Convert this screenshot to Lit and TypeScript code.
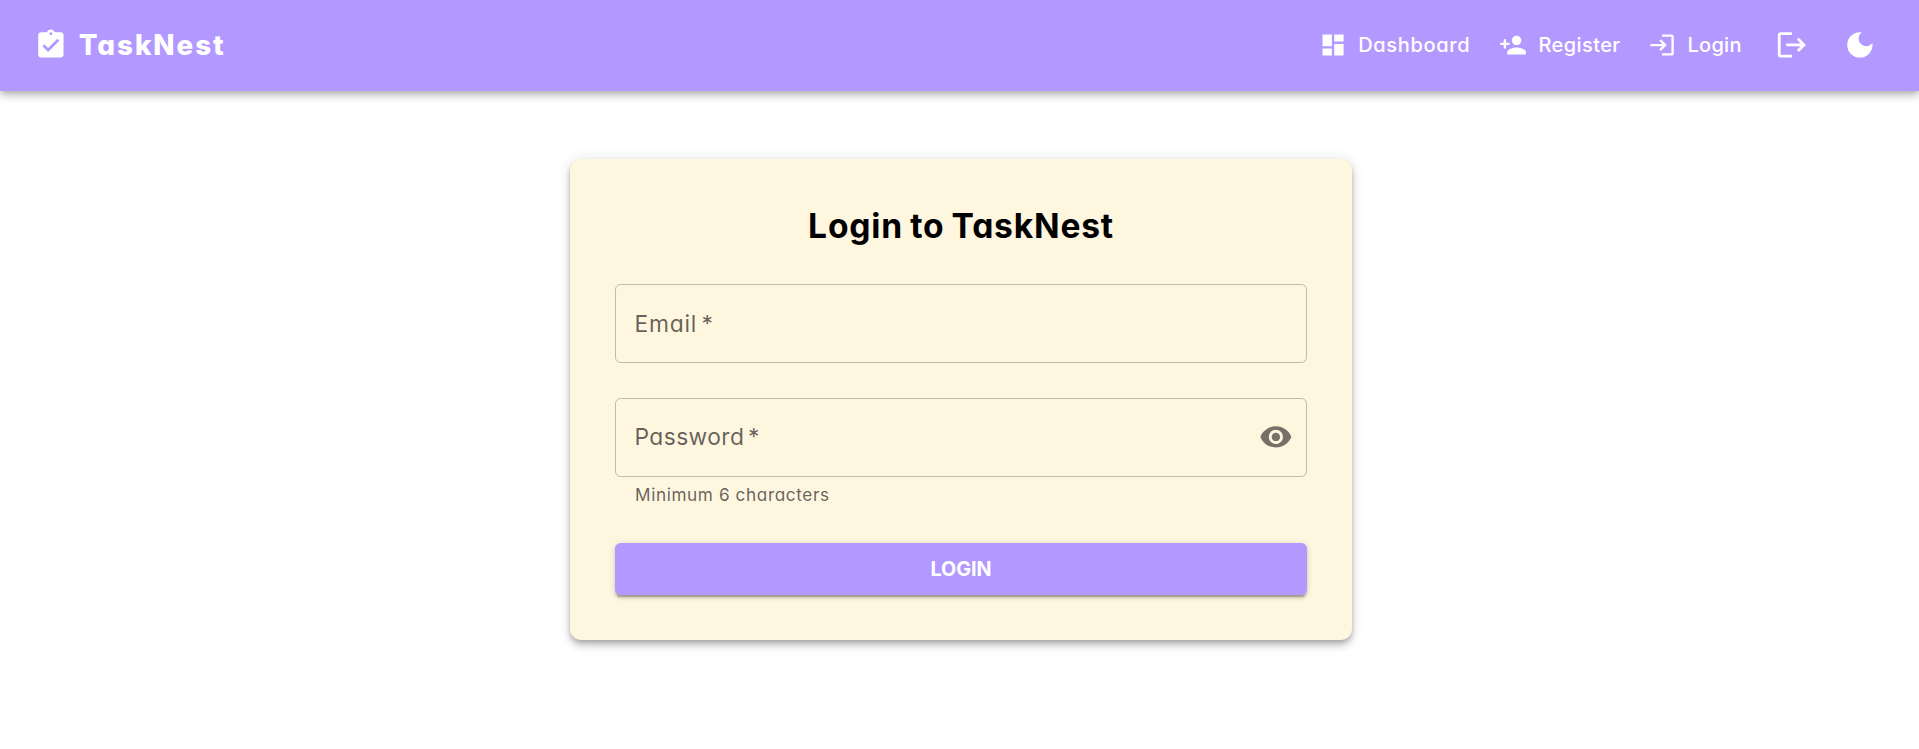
import { LitElement, html, css, svg } from "lit";

const ICONS = {
  brand: "M19 3h-4.18C14.4 1.84 13.3 1 12 1c-1.3 0-2.4.84-2.82 2H5c-1.1 0-2 .9-2 2v14c0 1.1.9 2 2 2h14c1.1 0 2-.9 2-2V5c0-1.1-.9-2-2-2m-7 0c.55 0 1 .45 1 1s-.45 1-1 1-1-.45-1-1 .45-1 1-1m-2 14-4-4 1.41-1.41L10 14.17l6.59-6.59L18 9z",
  dashboard: "M3 13h8V3H3zm0 8h8v-6H3zm10 0h8V11h-8zm0-18v6h8V3z",
  register: "M15 12c2.21 0 4-1.79 4-4s-1.79-4-4-4-4 1.79-4 4 1.79 4 4 4m-9-2V7H4v3H1v2h3v3h2v-3h3v-2zm9 4c-2.67 0-8 1.34-8 4v2h16v-2c0-2.66-5.33-4-8-4",
  login: "M11 7 9.6 8.4l2.6 2.6H2v2h10.2l-2.6 2.6L11 17l5-5zm9 12h-8v2h8c1.1 0 2-.9 2-2V5c0-1.1-.9-2-2-2h-8v2h8z",
  logout: "m17 7-1.41 1.41L18.17 11H8v2h10.17l-2.58 2.58L17 17l5-5zM4 5h8V3H4c-1.1 0-2 .9-2 2v14c0 1.1.9 2 2 2h8v-2H4z",
  moon: "M12 3c-4.97 0-9 4.03-9 9s4.03 9 9 9 9-4.03 9-9c0-.46-.04-.92-.1-1.36-.98 1.37-2.58 2.26-4.4 2.26-2.98 0-5.4-2.42-5.4-5.4 0-1.81.89-3.42 2.26-4.4-.44-.06-.9-.1-1.36-.1",
  eye: "M12 4.5C7 4.5 2.73 7.61 1 12c1.73 4.39 6 7.5 11 7.5s9.27-3.11 11-7.5c-1.73-4.39-6-7.5-11-7.5M12 17c-2.76 0-5-2.24-5-5s2.24-5 5-5 5 2.24 5 5-2.24 5-5 5m0-8c-1.66 0-3 1.34-3 3s1.34 3 3 3 3-1.34 3-3-1.34-3-3-3",
};

const icon = (name: keyof typeof ICONS, size = "") =>
  html`<svg class="icon ${size}" viewBox="0 0 24 24" aria-hidden="true">${svg`<path d=${ICONS[name]}></path>`}</svg>`;

class AppRoot extends LitElement {
  static styles = css`
    :host {
      display: block;
      height: 100vh;
      overflow: hidden;
      background: #fff;
      font-family: Inter, "Open Sans", sans-serif;
      font-feature-settings: "cv11";
    }
    * { box-sizing: border-box; }
    button { font: inherit; font-feature-settings: inherit; color: inherit; border: 0; background: none; padding: 0; margin: 0; }
    .icon { width: 33.75px; height: 33.75px; fill: currentColor; flex: none; display: block; }
    .small { width: 28.125px; height: 28.125px; }
    .bar {
      height: 90.75px;
      padding: 0 42.5px 1px 33.75px;
      display: flex;
      align-items: center;
      justify-content: space-between;
      color: #fff;
      background: #b399ff;
      box-shadow: 0 2.8px 5.6px -1.4px rgba(0,0,0,.2), 0 5.6px 7px 0 rgba(0,0,0,.14), 0 1.4px 14px 0 rgba(0,0,0,.12);
    }
    .brand { display: flex; align-items: center; gap: 11.25px; font-size: 27.8px; font-weight: 800; letter-spacing: 1.95px; }
    .nav { display: flex; align-items: center; font-size: 20px; font-weight: 500; }
    .link { display: flex; align-items: center; gap: 11.6px; white-space: nowrap; }
    .dashboard { width: 180.3px; letter-spacing: .65px; }
    .register { width: 148.9px; letter-spacing: .4px; }
    .login { width: 127.5px; letter-spacing: .3px; }
    .actions { display: flex; gap: 33.8px; }
    .card {
      width: 782px;
      height: 481px;
      margin: 68.25px 0 0 570px;
      padding: 45px;
      display: flex;
      flex-direction: column;
      background: #fff6e0;
      border-radius: 11.25px;
      box-shadow: 0 2.8px 5.6px -1.4px rgba(0,0,0,.2), 0 5.6px 7px 0 rgba(0,0,0,.14), 0 1.4px 14px 0 rgba(0,0,0,.12);
    }
    .title { margin: 0 0 36px; line-height: 44px; font-size: 33.6px; font-weight: 700; letter-spacing: .8px; word-spacing: -1.5px; text-align: center; color: #000; }
    .field {
      height: 79px;
      padding: 0 13px 0 18.5px;
      display: flex;
      align-items: center;
      justify-content: space-between;
      border: 1px solid rgba(0,0,0,.24);
      border-radius: 5.6px;
      font-size: 22.8px;
      word-spacing: -3px;
      color: rgba(0,0,0,.62);
    }
    .email { margin-bottom: 35px; letter-spacing: .8px; }
    .password { letter-spacing: .4px; }
    .password-label { padding-bottom: 2px; }
    .eye { color: rgba(0,0,0,.54); }
    .hint { margin: 4px 20px 34px; line-height: 28px; font-size: 17.2px; letter-spacing: .6px; color: rgba(0,0,0,.62); }
    button.submit {
      height: 52.5px;
      border-radius: 5.6px;
      background: #b399ff;
      color: #fff;
      font-size: 19.8px;
      font-weight: 700;
      letter-spacing: -.1px;
      box-shadow: 0 4.2px 1.4px -2.8px rgba(0,0,0,.2), 0 2.8px 2.8px 0 rgba(0,0,0,.14), 0 1.4px 7px 0 rgba(0,0,0,.12);
    }
  `;

  render() {
    return html`
      <header class="bar">
        <div class="brand">${icon("brand")}<span>TaskNest</span></div>
        <nav class="nav">
          <a class="link dashboard">${icon("dashboard", "small")}<span>Dashboard</span></a>
          <a class="link register">${icon("register", "small")}<span>Register</span></a>
          <a class="link login">${icon("login", "small")}<span>Login</span></a>
          <div class="actions">
            <button aria-label="Logout">${icon("logout")}</button>
            <button aria-label="Dark mode">${icon("moon")}</button>
          </div>
        </nav>
      </header>
      <main class="card">
        <h1 class="title">Login to TaskNest</h1>
        <div class="field email"><span>Email *</span></div>
        <div class="field password">
          <span class="password-label">Password *</span>
          <button class="eye" aria-label="Show password">${icon("eye")}</button>
        </div>
        <div class="hint">Minimum 6 characters</div>
        <button class="submit">LOGIN</button>
      </main>
    `;
  }
}

customElements.define("app-root", AppRoot);
